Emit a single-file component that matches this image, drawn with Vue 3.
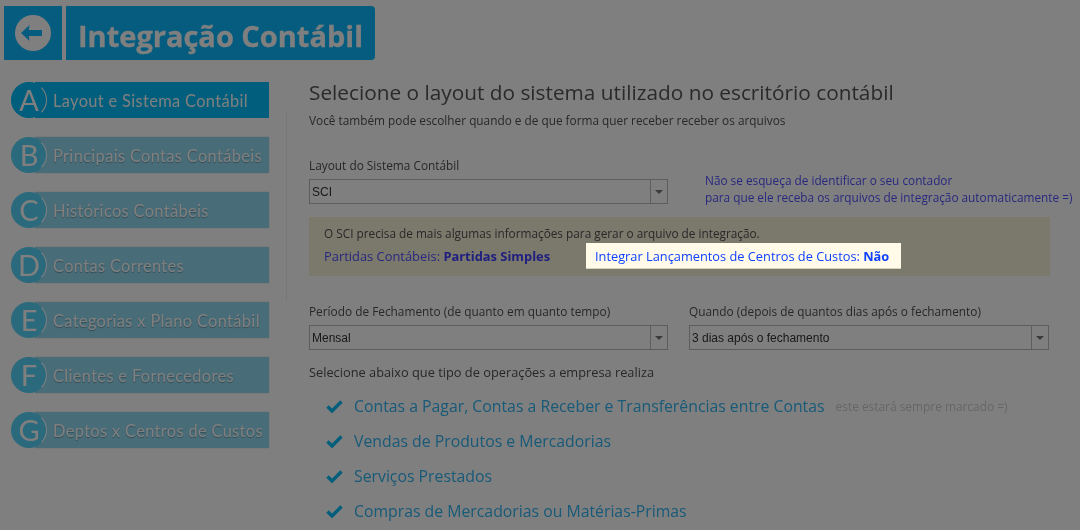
<script setup>
const menu = [
  { l: 'A', t: 'Layout e Sistema Contábil', active: true },
  { l: 'B', t: 'Principais Contas Contábeis' },
  { l: 'C', t: 'Históricos Contábeis' },
  { l: 'D', t: 'Contas Correntes' },
  { l: 'E', t: 'Categorias x Plano Contábil' },
  { l: 'F', t: 'Clientes e Fornecedores' },
  { l: 'G', t: 'Deptos x Centros de Custos' }
]
const ops = [
  { t: 'Contas a Pagar, Contas a Receber e Transferências entre Contas', n: 'este estará sempre marcado =)' },
  { t: 'Vendas de Produtos e Mercadorias' },
  { t: 'Serviços Prestados' },
  { t: 'Compras de Mercadorias ou Matérias-Primas' }
]
</script>

<template>
  <div class="page">
    <header class="head">
      <a class="back">
        <svg width="36" height="36" viewBox="0 0 36 36">
          <circle cx="18" cy="18" r="18" />
          <path d="M6 18 L14.5 10 L13.8 15 H27 V21 H13.8 L14.5 26 Z" />
        </svg>
      </a>
      <h1 class="brand">Integração Contábil</h1>
    </header>
    <div class="body">
      <nav class="side">
        <a v-for="m in menu" :key="m.l" class="item" :class="{ active: m.active }">
          <span class="letter">{{ m.l }}</span>
          <span class="label">{{ m.t }}</span>
        </a>
      </nav>
      <main class="main">
        <h2 class="title">Selecione o layout do sistema utilizado no escritório contábil</h2>
        <p class="sub">Você também pode escolher quando e de que forma quer receber receber os arquivos</p>
        <div class="row first">
          <div class="field">
            <label>Layout do Sistema Contábil</label>
            <div class="select"><span>SCI</span><i><b></b></i></div>
          </div>
          <p class="hint">Não se esqueça de identificar o seu contador<br>para que ele receba os arquivos de integração automaticamente =)</p>
        </div>
        <section class="notice">
          <p>O SCI precisa de mais algumas informações para gerar o arquivo de integração.</p>
          <div class="links">
            <a class="plain">Partidas Contábeis: <b>Partidas Simples</b></a>
            <a class="hl">Integrar Lançamentos de Centros de Custos: <b>Não</b></a>
          </div>
        </section>
        <div class="row second">
          <div class="field">
            <label>Período de Fechamento (de quanto em quanto tempo)</label>
            <div class="select"><span>Mensal</span><i><b></b></i></div>
          </div>
          <div class="field wide">
            <label>Quando (depois de quantos dias após o fechamento)</label>
            <div class="select"><span>3 dias após o fechamento</span><i><b></b></i></div>
          </div>
        </div>
        <p class="lead">Selecione abaixo que tipo de operações a empresa realiza</p>
        <ul class="ops">
          <li v-for="o in ops" :key="o.t">
            <svg width="17" height="14" viewBox="0 0 17 14"><path d="M1.5 7.5 L6 12 L15.5 2.5" /></svg>
            <span class="op">{{ o.t }}</span>
            <small v-if="o.n">{{ o.n }}</small>
          </li>
        </ul>
      </main>
    </div>
    <div class="overlay"></div>
  </div>
</template>

<style>
html, body { margin: 0; background: #fff; overflow: hidden; }
</style>

<style scoped>
.page { position: relative; width: 1080px; height: 530px; overflow: hidden; background: #fff; font-family: "Open Sans", sans-serif; color: #555; filter: blur(.3px); }
.overlay { position: absolute; inset: 0; background: rgba(0, 0, 0, .5); z-index: 5; }
.head { display: flex; gap: 4px; padding: 6px 0 0 4px; height: 54px; }
.back { width: 58px; height: 54px; background: #0bb9fc; display: flex; align-items: center; justify-content: center; }
.back circle { fill: #fff; }
.back path { fill: #0bb9fc; }
.brand { margin: 0; width: 309px; height: 54px; box-sizing: border-box; padding-left: 12px; background: #0bb9fc; border-radius: 0 4px 4px 0; font: 700 29px/60px "Open Sans", sans-serif; color: #fff; white-space: nowrap; -webkit-text-stroke: .3px #fff; }
.body { display: flex; }
.side { width: 258px; margin: 22px 0 0 11px; display: flex; flex-direction: column; gap: 19px; }
.item { position: relative; height: 36px; display: flex; align-items: center; }
.item::before { content: ""; position: absolute; left: 24px; right: 0; top: 0; bottom: 0; background: #90d8f0; box-shadow: 0 0 1px rgba(0,0,0,.3); }
.item.active::before { background: #02bcf8; box-shadow: none; }
.letter { position: relative; width: 36px; height: 36px; box-sizing: border-box; border-radius: 50%; background: #56d4f8; border: 1px solid #56d4f8; border-right-color: #fff; color: #fff; font: 400 29px/33px "Lato", sans-serif; text-align: center; flex: none; }
.active .letter { background: #02bcf8; border-color: #02bcf8; border-right-color: #fff; }
.label { position: relative; margin-left: 6px; padding-top: 2px; color: #fff; font: 400 16.4px/20px "Lato", sans-serif; letter-spacing: .35px; white-space: nowrap; text-shadow: 0 1px 1px rgba(0,0,0,.3); }
.active .label { text-shadow: none; }
.main { margin: 16px 0 0 40px; width: 740px; position: relative; }
.main::before { content: ""; position: absolute; left: -23px; top: 36px; height: 190px; width: 1px; background: #efefef; }
.title { margin: 0; color: #555; font: 400 20.8px/32px "Open Sans", sans-serif; white-space: nowrap; }
.sub { margin: 3px 0 0; font-size: 11.82px; line-height: 18px; color: #505050; white-space: nowrap; }
.row { display: flex; gap: 21px; }
.first { margin-top: 27px; }
.second { margin-top: 26px; }
.field { width: 359px; flex: none; }
.wide { width: 360px; }
label { display: block; font-size: 11.85px; line-height: 18px; color: #505050; white-space: nowrap; }
.select { margin-top: 5px; height: 25px; box-sizing: border-box; border: 1px solid #bbb; background: #fff; display: flex; font: 12px/24px "Liberation Sans", sans-serif; color: #333; padding-left: 2px; justify-content: space-between; }
.select i { width: 16px; border-left: 1px solid #bbb; display: flex; align-items: center; justify-content: center; }
.select b { border: 4px solid transparent; border-top-color: #777; border-bottom: 0; }
.hint { margin: 16px 0 0 16px; font-size: 11.8px; line-height: 17px; color: #5050ff; white-space: nowrap; }
.notice { margin-top: 11px; width: 741px; height: 59px; box-sizing: border-box; background: #f6f0d9; padding: 7px 15px 0; }
.notice p { margin: 0; font-size: 11.8px; line-height: 18px; color: #505050; }
.links { display: flex; margin-top: 1px; align-items: flex-start; }
.plain { width: 262px; flex: none; font-size: 12.9px; line-height: 26px; color: #5050ff; white-space: nowrap; }
.plain b { color: #4040ff; }
.hl { position: relative; z-index: 6; height: 26px; box-sizing: border-box; padding: 0 12px 0 9px; background: #fffbe8; border-bottom: 1px solid #d8d2bd; color: #1040ff; font-size: 12.8px; line-height: 26px; white-space: nowrap; }
.lead { margin: 13px 0 0; font-size: 12.8px; line-height: 18px; color: #505050; }
.ops { list-style: none; margin: 7px 0 0 17px; padding: 0; }
.ops li { display: flex; align-items: center; height: 35px; }
.ops svg { flex: none; margin-right: 11px; }
.ops svg path { fill: none; stroke: #06bcf8; stroke-width: 3.4; }
.op { font-size: 15.8px; color: #30b4f0; white-space: nowrap; }
small { margin-left: 11px; font-size: 11.9px; color: #ccc; white-space: nowrap; }
</style>
